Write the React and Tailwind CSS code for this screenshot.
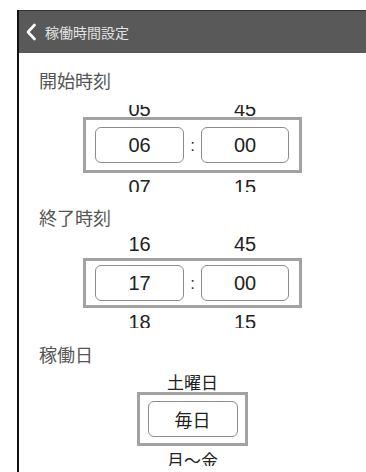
import React from 'react';

const jp = { fontFamily: '"Noto Sans CJK JP", "Noto Sans", sans-serif' };
const num = { fontFamily: '"Liberation Sans", Arial, "Noto Sans CJK JP", sans-serif' };

function NumRow({ left, right, className, innerClass }) {
  return (
    <div className={`w-[219px] overflow-hidden flex px-[12px] ${className}`} style={num}>
      <div className={`w-[89px] text-center text-[20px] leading-[20px] text-[#222] ${innerClass}`}>{left}</div>
      <div className="w-[17px]" />
      <div className={`w-[88px] text-center text-[20px] leading-[20px] text-[#222] ${innerClass}`}>{right}</div>
    </div>
  );
}

function TimePicker({ hour, minute, prev, next, boxClass, topClass, topInner, bottomClass }) {
  return (
    <div className="flex flex-col items-center">
      <NumRow left={prev[0]} right={prev[1]} className={topClass} innerClass={topInner} />
      <div className={`w-[219px] border-[3px] border-[#a2a2a2] flex items-center pl-[9px] ${boxClass}`} style={num}>
        <div className="w-[89px] h-[36px] rounded-[6px] border border-[#8c8c8c] flex items-center justify-center text-[20px] text-[#222]">
          {hour}
        </div>
        <div className="w-[17px] text-center text-[17px] text-[#333] leading-none">:</div>
        <div className="w-[88px] h-[36px] rounded-[6px] border border-[#8c8c8c] flex items-center justify-center text-[20px] text-[#222]">
          {minute}
        </div>
      </div>
      <NumRow left={next[0]} right={next[1]} className={bottomClass} innerClass="mt-[4px]" />
    </div>
  );
}

export default function App() {
  return (
    <div className="w-[366px] h-[472px] bg-white pt-[10px] pl-[17px] overflow-hidden">
      <div className="h-full border-l-2 border-[#111] flex flex-col">
        <header className="h-[43px] bg-[#595959] border-t border-[#333] flex items-center pl-[6px] gap-[8px]" style={jp}>
          <svg width="12" height="18" viewBox="0 0 12 18" fill="none">
            <path d="M9.5 2 L3 9 L9.5 16" stroke="#fff" strokeWidth="2.6" strokeLinecap="round" strokeLinejoin="round" />
          </svg>
          <span className="text-[14px] text-[#e2e2e2]">稼働時間設定</span>
        </header>

        <div className="flex flex-col">
          <div className="pl-[20px] mt-[18px] text-[18px] leading-[18px] text-[#555]" style={jp}>開始時刻</div>
          <TimePicker
            hour="06"
            minute="00"
            prev={['05', '45']}
            next={['07', '15']}
            topClass="mt-[16px] h-[12px]"
            topInner="-mt-[6px]"
            boxClass="h-[56px]"
            bottomClass="h-[19px]"
          />

          <div className="pl-[20px] mt-[16px] text-[18px] leading-[18px] text-[#555]" style={jp}>終了時刻</div>
          <TimePicker
            hour="17"
            minute="00"
            prev={['16', '45']}
            next={['18', '15']}
            topClass="mt-[8px] h-[24px]"
            topInner="mt-0"
            boxClass="h-[50px]"
            bottomClass="h-[20px]"
          />

          <div className="pl-[20px] mt-[17px] text-[18px] leading-[18px] text-[#555]" style={jp}>稼働日</div>
          <div className="flex flex-col items-center" style={jp}>
            <div className="mt-[10px] h-[19px] overflow-hidden">
              <div className="text-[17px] leading-[20px] -mt-[1px] text-[#222]">土曜日</div>
            </div>
            <div className="w-[111px] h-[54px] border-[3px] border-[#a2a2a2] flex items-center justify-center">
              <div className="w-[90px] h-[36px] rounded-[6px] border border-[#8c8c8c] flex items-center justify-center text-[18px] text-[#222]">
                毎日
              </div>
            </div>
            <div className="h-[20px] overflow-hidden">
              <div className="text-[17px] leading-[20px] mt-[4px] text-[#222]">月～金</div>
            </div>
          </div>
        </div>
      </div>
    </div>
  );
}
